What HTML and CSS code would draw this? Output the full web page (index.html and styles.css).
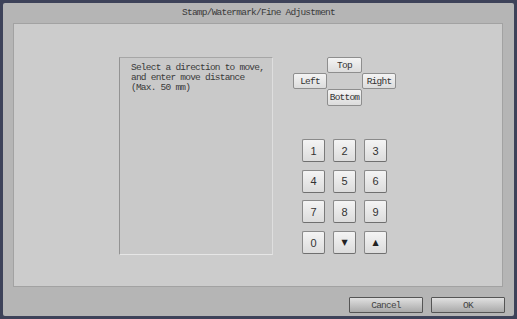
FILE: index.html
```html
<!DOCTYPE html>
<html>
<head>
<meta charset="utf-8">
<link rel="stylesheet" href="styles.css">
</head>
<body>
<div class="frame">
  <div class="title">Stamp/Watermark/Fine Adjustment</div>
  <div class="panel">
    <div class="info">Select a direction to move,<br>and enter move distance<br>(Max. 50 mm)</div>
    <div class="controls">
      <div class="dirs">
        <button class="btn dir top">Top</button>
        <button class="btn dir left">Left</button>
        <button class="btn dir right">Right</button>
        <button class="btn dir bottom">Bottom</button>
      </div>
      <div class="keypad">
        <button class="btn key">1</button>
        <button class="btn key">2</button>
        <button class="btn key">3</button>
        <button class="btn key">4</button>
        <button class="btn key">5</button>
        <button class="btn key">6</button>
        <button class="btn key">7</button>
        <button class="btn key">8</button>
        <button class="btn key">9</button>
        <button class="btn key">0</button>
        <button class="btn key tri">&#9660;</button>
        <button class="btn key tri">&#9650;</button>
      </div>
    </div>
  </div>
  <div class="footer">
    <button class="act">Cancel</button>
    <button class="act">OK</button>
  </div>
</div>
</body>
</html>
```
FILE: styles.css
```css
html, body {
  margin: 0;
  padding: 0;
  background: #3d4259;
}
.frame {
  width: 517px;
  height: 319px;
  box-sizing: border-box;
  border: 3px solid #3d4259;
  border-radius: 5px;
  background: #b5b5b5;
  display: flex;
  flex-direction: column;
  font-family: "Liberation Mono", "DejaVu Sans Mono", monospace;
  color: #333;
}
.txt {
  font-size: 9.5px;
  letter-spacing: -0.77px;
}
.title {
  height: 20px;
  line-height: 19px;
  text-align: center;
  font-size: 9.5px;
  letter-spacing: -0.77px;
  color: #3a3a3a;
}
.panel {
  margin-left: 10px;
  width: 490px;
  height: 264px;
  box-sizing: border-box;
  border: 1px solid #a2a2a2;
  background: #cccccc;
  display: flex;
  padding: 33px 0 0 105px;
}
.info {
  width: 154px;
  height: 198px;
  box-sizing: border-box;
  border-top: 1px solid #a6a6a6;
  border-left: 1px solid #939393;
  border-right: 1px solid #dedede;
  border-bottom: 1px solid #e6e6e6;
  background: #c9c9c9;
  padding: 5px 0 0 11px;
  font-size: 9.5px;
  letter-spacing: -0.77px;
  line-height: 10px;
  color: #3a3a3a;
}
.controls {
  margin-left: 20px;
  display: flex;
  flex-direction: column;
}
.btn {
  margin: 0;
  padding: 0;
  box-sizing: border-box;
  border: 1px solid #8e8e8e;
  border-radius: 2px;
  background: linear-gradient(#f4f4f4, #dcdcdc);
  color: #333;
  font-family: "Liberation Mono", "DejaVu Sans Mono", monospace;
  font-size: 9.5px;
  letter-spacing: -0.77px;
  display: flex;
  align-items: center;
  justify-content: center;
}
.dirs {
  display: grid;
  grid-template-columns: 34px 35px 34px;
  grid-template-rows: 16px 16px 17px;
}
.dir.top { grid-column: 2; grid-row: 1; }
.dir.left { grid-column: 1; grid-row: 2; }
.dir.right { grid-column: 3; grid-row: 2; }
.dir.bottom { grid-column: 2; grid-row: 3; }
.keypad {
  margin: 33px 0 0 9px;
  display: grid;
  grid-template-columns: repeat(3, 23px);
  grid-auto-rows: 23px;
  column-gap: 8px;
  row-gap: 7.7px;
}
.key {
  font-family: "Liberation Sans", "DejaVu Sans", sans-serif;
  font-size: 11px;
  letter-spacing: 0;
  border-color: #8a8a8a;
  border-right-color: #7a7a7a;
  border-bottom-color: #6f6f6f;
}
.key.tri {
  font-family: "DejaVu Sans", sans-serif;
  font-size: 8px;
  color: #222;
}
.footer {
  display: flex;
  justify-content: flex-end;
  gap: 8px;
  padding: 10px 9px 0 0;
}
.act {
  width: 74px;
  height: 16px;
  margin: 0;
  padding: 0;
  box-sizing: border-box;
  border: 1px solid #555;
  border-radius: 1px;
  background: linear-gradient(#e0e0e0, #a9a9a9);
  color: #444;
  font-family: "Liberation Mono", "DejaVu Sans Mono", monospace;
  font-size: 9.5px;
  letter-spacing: -0.77px;
  display: flex;
  align-items: center;
  justify-content: center;
}
```
